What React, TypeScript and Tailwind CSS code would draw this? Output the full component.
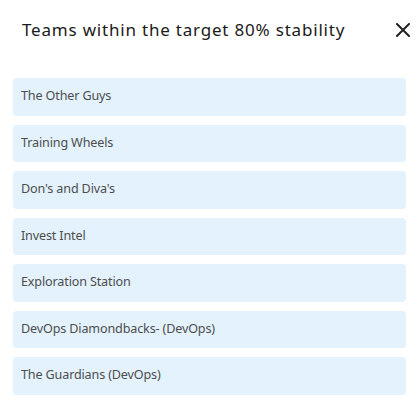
const teams = [
  "The Other Guys",
  "Training Wheels",
  "Don's and Diva's",
  "Invest Intel",
  "Exploration Station",
  "DevOps Diamondbacks- (DevOps)",
  "The Guardians (DevOps)",
];

function CloseIcon() {
  return (
    <svg width="14" height="14" viewBox="0 0 14 14" className="shrink-0">
      <path d="M1 1L13 13M13 1L1 13" stroke="#222" strokeWidth="2" strokeLinecap="square" />
    </svg>
  );
}

function TeamRow({ name }: { name: string }) {
  return (
    <div className="flex h-[37.5px] items-center rounded-[4px] bg-[#e3f2fd] px-2 text-[12.6px] tracking-[-0.15px] text-[#4d4d4d]">
      {name}
    </div>
  );
}

export default function App() {
  return (
    <div className="h-[405px] w-[419px] bg-white font-['Noto_Sans',sans-serif]">
      <div className="flex items-center justify-between pl-[22px] pr-[9px] pt-[17px]">
        <h2 className="text-[17px] leading-[26px] tracking-[0.8px] text-[#1a1a1a]">Teams within the target 80% stability</h2>
        <CloseIcon />
      </div>
      <div className="mx-[13px] mt-[35px] flex flex-col gap-[9px]">
        {teams.map((t) => (
          <TeamRow key={t} name={t} />
        ))}
      </div>
    </div>
  );
}
